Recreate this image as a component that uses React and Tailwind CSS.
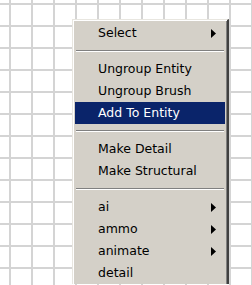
import React from 'react';

const items = [
    { label: 'Select', sub: true },
    { sep: true },
    { label: 'Ungroup Entity' },
    { label: 'Ungroup Brush' },
    { label: 'Add To Entity', active: true },
    { sep: true },
    { label: 'Make Detail' },
    { label: 'Make Structural' },
    { sep: true },
    { label: 'ai', sub: true },
    { label: 'ammo', sub: true },
    { label: 'animate', sub: true },
    { label: 'detail' },
];

const Arrow = ({ color }) => (
    <svg width="5" height="9" viewBox="0 0 5 9" className="shrink-0">
        <path d="M0 0 L5 4.5 L0 9 Z" fill={color} />
    </svg>
);

const App = () => {
    return (
        <div className="w-[252px] h-[285px] overflow-hidden bg-white bg-[linear-gradient(to_right,#d4d4d4_2px,transparent_2px),linear-gradient(to_bottom,#d4d4d4_2px,transparent_2px)] bg-[size:22px_22px] bg-[position:9px_3px] pl-[72px] pt-[19px] font-['DejaVu_Sans',sans-serif]">
            <div className="w-[157px] bg-[#d4d0c8] border-l border-t border-r-2 border-l-[#e8e6e0] border-t-[#e8e6e0] border-r-[#404040] shadow-[inset_1px_1px_0_#ffffff,inset_-1px_0_0_#808080] px-[2px] pt-[2px]">
                {items.map((item, i) =>
                    item.sep ? (
                        <div key={i} className="h-[14px] flex flex-col justify-center px-[1px]">
                            <div className="h-px bg-[#808080]" />
                            <div className="h-px bg-white" />
                        </div>
                    ) : (
                        <div
                            key={i}
                            className={`h-[22px] flex items-center pl-[23px] pr-[9px] text-[12.5px] ${item.active ? 'bg-[#0a246a] text-white' : 'text-black'}`}
                        >
                            <span className="flex-1 whitespace-nowrap">{item.label}</span>
                            {item.sub && <Arrow color={item.active ? '#fff' : '#000'} />}
                        </div>
                    )
                )}
            </div>
        </div>
    );
};

export default App;
